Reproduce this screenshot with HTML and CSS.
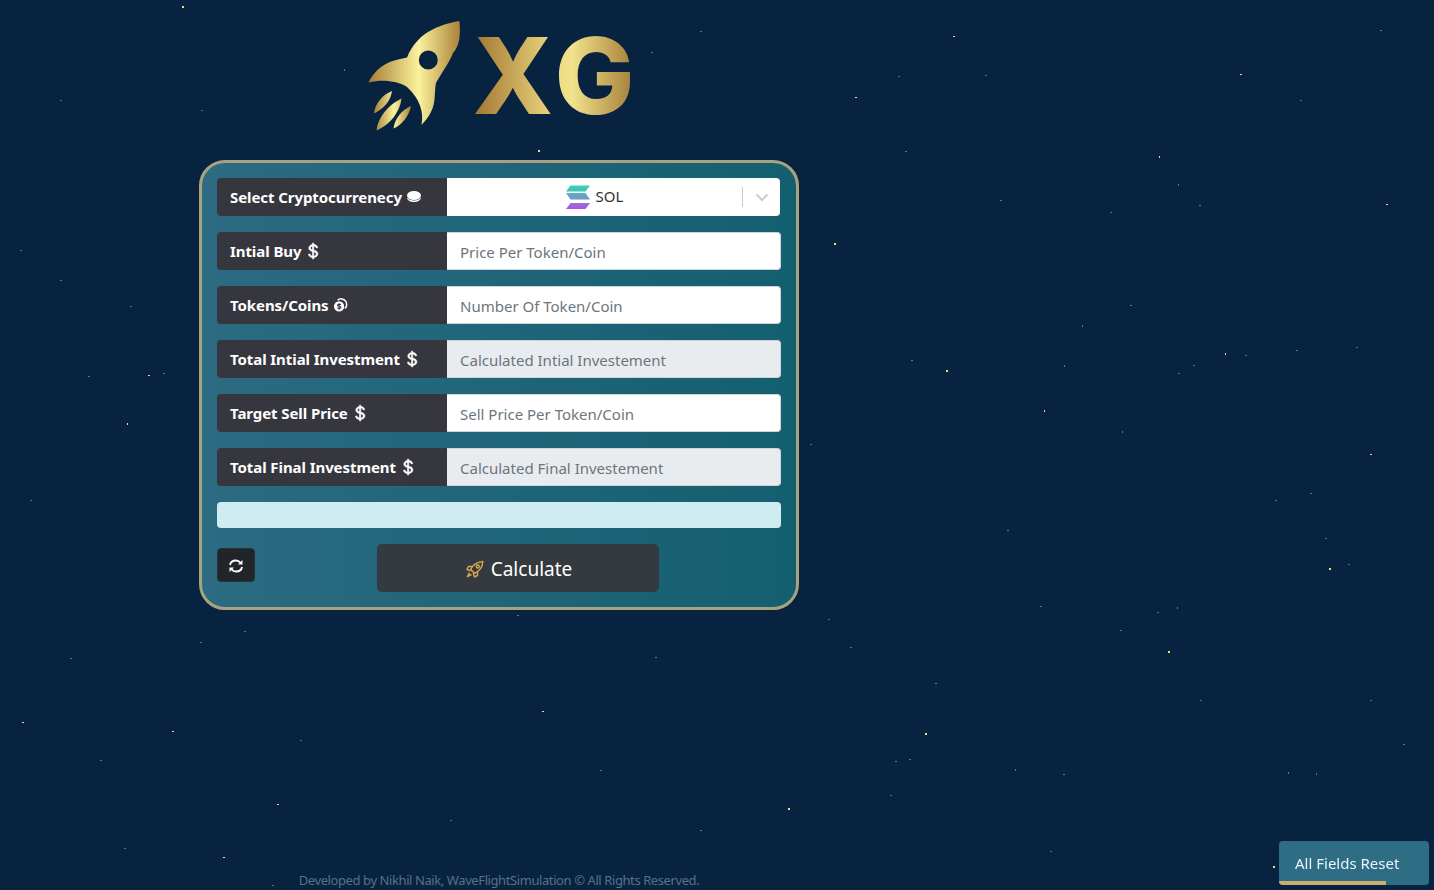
FILE: index.html
```html
<!DOCTYPE html>
<html lang="en">
  <head>
    <meta charset="UTF-8" />
    <meta name="viewport" content="width=device-width, initial-scale=1.0" />
    <title>XG Calculator</title>
    <link rel="stylesheet" href="styles.css">
  </head>
  <body>
    <!-- star field -->
    <svg class="stars" viewBox="0 0 1434 890" width="1434" height="890">
      <g fill="#e4e47a">
        <rect x="182" y="6" width="2" height="2"/><rect x="953" y="36" width="2" height="1"/><rect x="538" y="150" width="2" height="2"/>
        <rect x="855" y="97" width="2" height="1"/><rect x="834" y="243" width="2" height="2"/><rect x="946" y="370" width="2" height="2"/>
        <rect x="1159" y="156" width="1" height="2"/><rect x="1225" y="353" width="1" height="2"/><rect x="1329" y="568" width="2" height="2"/>
        <rect x="1168" y="651" width="2" height="2"/><rect x="22" y="722" width="2" height="1"/><rect x="925" y="733" width="2" height="2"/>
        <rect x="788" y="808" width="2" height="2"/><rect x="277" y="804" width="2" height="1"/><rect x="223" y="857" width="2" height="1"/>
        <rect x="542" y="711" width="2" height="1"/><rect x="172" y="731" width="2" height="1"/><rect x="1273" y="866" width="2" height="2"/>
        <rect x="1240" y="74" width="2" height="1"/><rect x="1386" y="204" width="2" height="1"/><rect x="148" y="375" width="2" height="1"/>
        <rect x="1044" y="410" width="1" height="2"/><rect x="127" y="423" width="1" height="2"/><rect x="1370" y="454" width="2" height="1"/>
      </g>
      <g fill="#5f8070">
        <rect x="700" y="31" width="2" height="1"/><rect x="651" y="52" width="2" height="1"/><rect x="201" y="110" width="2" height="1"/>
        <rect x="344" y="69" width="1" height="2"/><rect x="898" y="76" width="2" height="1"/><rect x="985" y="75" width="2" height="1"/>
        <rect x="1178" y="184" width="1" height="2"/><rect x="1199" y="205" width="2" height="1"/><rect x="1110" y="212" width="2" height="1"/>
        <rect x="905" y="151" width="2" height="1"/><rect x="1130" y="305" width="2" height="1"/><rect x="1082" y="325" width="1" height="2"/>
        <rect x="130" y="306" width="2" height="1"/><rect x="1178" y="373" width="2" height="1"/><rect x="1193" y="365" width="2" height="1"/>
        <rect x="1245" y="355" width="2" height="1"/><rect x="1296" y="350" width="2" height="1"/><rect x="1356" y="347" width="2" height="1"/>
        <rect x="88" y="376" width="2" height="1"/><rect x="163" y="373" width="2" height="1"/><rect x="810" y="444" width="2" height="1"/>
        <rect x="1064" y="365" width="1" height="2"/><rect x="911" y="360" width="2" height="1"/><rect x="1122" y="431" width="1" height="2"/>
        <rect x="1348" y="564" width="2" height="1"/><rect x="517" y="615" width="2" height="1"/><rect x="244" y="631" width="2" height="1"/>
        <rect x="828" y="619" width="2" height="1"/><rect x="1177" y="607" width="1" height="2"/><rect x="1157" y="612" width="2" height="1"/>
        <rect x="1040" y="606" width="2" height="1"/><rect x="1007" y="530" width="2" height="1"/><rect x="1275" y="500" width="2" height="1"/>
        <rect x="1310" y="493" width="2" height="1"/><rect x="1325" y="538" width="2" height="1"/><rect x="124" y="848" width="2" height="1"/>
        <rect x="1403" y="744" width="2" height="1"/><rect x="1288" y="772" width="1" height="2"/><rect x="1316" y="773" width="1" height="2"/>
        <rect x="1063" y="774" width="2" height="1"/><rect x="1015" y="769" width="1" height="2"/><rect x="909" y="759" width="2" height="1"/>
        <rect x="895" y="761" width="2" height="1"/><rect x="890" y="795" width="2" height="1"/><rect x="1050" y="851" width="2" height="1"/>
        <rect x="272" y="885" width="2" height="1"/><rect x="70" y="658" width="2" height="1"/><rect x="200" y="642" width="2" height="1"/>
        <rect x="655" y="657" width="2" height="1"/><rect x="935" y="683" width="2" height="1"/><rect x="850" y="647" width="2" height="1"/>
        <rect x="1120" y="630" width="2" height="1"/><rect x="1370" y="700" width="2" height="1"/><rect x="600" y="770" width="2" height="1"/>
        <rect x="450" y="820" width="2" height="1"/><rect x="700" y="830" width="2" height="1"/><rect x="300" y="740" width="2" height="1"/>
        <rect x="100" y="760" width="2" height="1"/><rect x="1200" y="700" width="2" height="1"/><rect x="30" y="500" width="2" height="1"/>
        <rect x="1000" y="200" width="2" height="1"/><rect x="1300" y="100" width="2" height="1"/><rect x="1380" y="30" width="2" height="1"/>
        <rect x="60" y="100" width="2" height="1"/><rect x="20" y="250" width="2" height="1"/><rect x="60" y="280" width="2" height="1"/>
      </g>
    </svg>

    <div class="page">
      <header class="logo">
        <svg class="rocket" viewBox="0 0 110 120" width="110" height="120">
          <defs>
            <linearGradient id="gold" x1="0" y1="0" x2="1" y2="0">
              <stop offset="0" stop-color="#a67f36"/>
              <stop offset="0.55" stop-color="#fbf29c"/>
              <stop offset="1" stop-color="#ab8238"/>
            </linearGradient>
          </defs>
          <path fill="url(#gold)" fill-rule="evenodd" d="M99.5 6 C100.5 20 100 30 93 38 C88 50 80 60 76 68 C74 78 76 88 71 97 C68 103 64 107 61.5 110 C64 97 60 84 47 72 C38 66 22 64 8.5 67.5 C14 56 24 47 40 44 C44 43 46 43 47 42.5 C52 30 60 22 68 17 C78 11 88 8 99.5 6 Z M68.3 35.5 A9.5 9.5 0 1 0 68.3 54.5 A9.5 9.5 0 1 0 68.3 35.5 Z"/>
          <path fill="url(#gold)" d="M32 76 C31 85 24 94 14 98.500 C15 89 22 80 32 76 Z M41.500 83.500 C40 97 30 110 16.500 115.500 C18 102 28 90 41.500 83.500 Z M51 91 C49 101 42 110 33.500 113.500 C35 103 42 95 51 91 Z"/>
        </svg>
        <span class="brand">XG</span>
      </header>

      <form class="panel">
        <div class="row">
          <label class="row-label">Select Cryptocurrenecy
            <svg class="ico" viewBox="0 0 16 16" width="16" height="16"><ellipse cx="8" cy="6.500" rx="7" ry="4.500" fill="#fff"/><path d="M1 8.500c0 2.500 3 4.500 7 4.500s7-2 7-4.500c-1.500 2-4 3-7 3s-5.500-1-7-3z" fill="#fff"/></svg>
          </label>
          <div class="select">
            <div class="select-value">
              <svg viewBox="0 0 24 24" width="24" height="24">
                <defs>
                  <linearGradient id="sol" x1="0" y1="0" x2="0" y2="1">
                    <stop offset="0" stop-color="#35d6ad"/>
                    <stop offset="0.5" stop-color="#6a9fc6"/>
                    <stop offset="1" stop-color="#b44fe6"/>
                  </linearGradient>
                </defs>
                <path fill="url(#sol)" d="M4.500 0.500H24L19.500 6.500H0Z M0 8H19.500L24 14.500H4.500Z M4.500 18H24L19.500 24H0Z"/>
              </svg>
              <span class="select-text">SOL</span>
            </div>
            <span class="select-sep"></span>
            <span class="select-arrow">
              <svg viewBox="0 0 20 20" width="20" height="20"><path d="M4.500 7.500L10 13L15.500 7.500" fill="none" stroke="#ccc" stroke-width="2"/></svg>
            </span>
          </div>
        </div>

        <div class="row">
          <label class="row-label">Intial Buy
            <svg class="ico ico-dollar" viewBox="0 0 16 16" width="18" height="18"><path fill="#fff" stroke="#fff" stroke-width=".6" d="M4 10.781c.148 1.667 1.513 2.85 3.591 3.003V15h1.043v-1.216c2.27-.179 3.678-1.438 3.678-3.3 0-1.59-.947-2.51-2.956-3.028l-.722-.187V3.467c1.122.11 1.879.714 2.07 1.616h1.47c-.166-1.6-1.54-2.748-3.54-2.875V1H7.591v1.233c-1.939.23-3.27 1.472-3.27 3.156 0 1.454.966 2.483 2.661 2.917l.61.162v4.031c-1.149-.17-1.94-.8-2.131-1.718H4zm3.391-3.836c-1.043-.263-1.6-.825-1.6-1.616 0-.944.704-1.641 1.8-1.828v3.495l-.2-.05zm1.591 1.872c1.287.323 1.852.859 1.852 1.769 0 1.097-.826 1.828-2.2 1.939V8.73l.348.086z"/></svg>
          </label>
          <input class="field" type="text" placeholder="Price Per Token/Coin">
        </div>

        <div class="row">
          <label class="row-label">Tokens/Coins
            <svg class="ico" viewBox="0 0 16 16" width="15" height="15"><circle cx="6.500" cy="9" r="5.500" fill="#fff"/><path d="M8.500 7.200c-1-.8-3.800-.8-3.800.6 0 1.600 3.800.6 3.800 2.300 0 1.300-2.800 1.300-3.900.5M6.500 5.400v7.200" fill="none" stroke="#36363e" stroke-width="1.100"/><path d="M5 2.500c1-1.200 2.700-1.800 4.500-1.500 3.300.5 5.500 3.500 5 6.800-.2 1.300-.8 2.500-1.700 3.400" fill="none" stroke="#fff" stroke-width="1.600"/></svg>
          </label>
          <input class="field" type="text" placeholder="Number Of Token/Coin">
        </div>

        <div class="row">
          <label class="row-label">Total Intial Investment
            <svg class="ico ico-dollar" viewBox="0 0 16 16" width="18" height="18"><path fill="#fff" stroke="#fff" stroke-width=".6" d="M4 10.781c.148 1.667 1.513 2.85 3.591 3.003V15h1.043v-1.216c2.27-.179 3.678-1.438 3.678-3.3 0-1.59-.947-2.51-2.956-3.028l-.722-.187V3.467c1.122.11 1.879.714 2.07 1.616h1.47c-.166-1.6-1.54-2.748-3.54-2.875V1H7.591v1.233c-1.939.23-3.27 1.472-3.27 3.156 0 1.454.966 2.483 2.661 2.917l.61.162v4.031c-1.149-.17-1.94-.8-2.131-1.718H4zm3.391-3.836c-1.043-.263-1.6-.825-1.6-1.616 0-.944.704-1.641 1.8-1.828v3.495l-.2-.05zm1.591 1.872c1.287.323 1.852.859 1.852 1.769 0 1.097-.826 1.828-2.2 1.939V8.73l.348.086z"/></svg>
          </label>
          <input class="field" type="text" placeholder="Calculated Intial Investement" disabled>
        </div>

        <div class="row">
          <label class="row-label">Target Sell Price
            <svg class="ico ico-dollar" viewBox="0 0 16 16" width="18" height="18"><path fill="#fff" stroke="#fff" stroke-width=".6" d="M4 10.781c.148 1.667 1.513 2.85 3.591 3.003V15h1.043v-1.216c2.27-.179 3.678-1.438 3.678-3.3 0-1.59-.947-2.51-2.956-3.028l-.722-.187V3.467c1.122.11 1.879.714 2.07 1.616h1.47c-.166-1.6-1.54-2.748-3.54-2.875V1H7.591v1.233c-1.939.23-3.27 1.472-3.27 3.156 0 1.454.966 2.483 2.661 2.917l.61.162v4.031c-1.149-.17-1.94-.8-2.131-1.718H4zm3.391-3.836c-1.043-.263-1.6-.825-1.6-1.616 0-.944.704-1.641 1.8-1.828v3.495l-.2-.05zm1.591 1.872c1.287.323 1.852.859 1.852 1.769 0 1.097-.826 1.828-2.2 1.939V8.73l.348.086z"/></svg>
          </label>
          <input class="field" type="text" placeholder="Sell Price Per Token/Coin">
        </div>

        <div class="row">
          <label class="row-label">Total Final Investment
            <svg class="ico ico-dollar" viewBox="0 0 16 16" width="18" height="18"><path fill="#fff" stroke="#fff" stroke-width=".6" d="M4 10.781c.148 1.667 1.513 2.85 3.591 3.003V15h1.043v-1.216c2.27-.179 3.678-1.438 3.678-3.3 0-1.59-.947-2.51-2.956-3.028l-.722-.187V3.467c1.122.11 1.879.714 2.07 1.616h1.47c-.166-1.6-1.54-2.748-3.54-2.875V1H7.591v1.233c-1.939.23-3.27 1.472-3.27 3.156 0 1.454.966 2.483 2.661 2.917l.61.162v4.031c-1.149-.17-1.94-.8-2.131-1.718H4zm3.391-3.836c-1.043-.263-1.6-.825-1.6-1.616 0-.944.704-1.641 1.8-1.828v3.495l-.2-.05zm1.591 1.872c1.287.323 1.852.859 1.852 1.769 0 1.097-.826 1.828-2.2 1.939V8.73l.348.086z"/></svg>
          </label>
          <input class="field" type="text" placeholder="Calculated Final Investement" disabled>
        </div>

        <div class="result"></div>

        <div class="actions">
          <button class="btn-reset" type="button">
            <svg viewBox="0 0 16 16" width="16" height="16" fill="none" stroke="#fff" stroke-width="1.800">
              <path d="M2 7C2.500 4.200 5 2.500 8 2.500c2 0 3.500 1 4.500 2.300"/>
              <path d="M14 9c-.5 2.800-3 4.500-6 4.500-2 0-3.500-1-4.500-2.300"/>
              <path d="M14.500 2v4.500H10z" fill="#fff" stroke="none"/>
              <path d="M1.500 14V9.500H6z" fill="#fff" stroke="none"/>
            </svg>
          </button>
          <button class="btn-calc" type="button">
            <svg viewBox="0 0 18 18" width="18" height="18" fill="none" stroke="#d6a84f" stroke-width="1.400" stroke-linejoin="round">
              <path d="M4.800 9.500C6 5.500 11 2 16.800 1.500C16.800 7 13 12 8.500 13.200Z"/>
              <circle cx="11.800" cy="6.500" r="1.500"/>
              <path d="M6.500 6.500H2.500L1 9.500L5 10.800"/>
              <path d="M11.500 11.500V15.500L8.500 17L7.200 13"/>
              <path d="M3.500 12.500L1.500 16.500L5.500 14.500"/>
            </svg>
            <span>Calculate</span>
          </button>
        </div>
      </form>

      <footer class="credit">Developed by Nikhil Naik, WaveFlightSimulation © All Rights Reserved.</footer>
    </div>

    <div class="toast">
      All Fields Reset
      <div class="toast-bar"></div>
    </div>
  </body>
</html>
```

FILE: styles.css
```css
* {
  box-sizing: border-box;
  margin: 0;
  padding: 0;
}
html, body {
  height: 890px;
  overflow: hidden;
}
body {
  background-color: #082340;
  font-family: "Noto Sans", "Open Sans", sans-serif;
  font-size: 15px;
  position: relative;
}
.stars {
  position: absolute;
  left: 0;
  top: 0;
}
.page {
  position: relative;
  width: 600px;
  height: 890px;
  margin-left: 199px;
  display: flex;
  flex-direction: column;
}

/* logo */
.logo {
  height: 160px;
  display: flex;
  align-items: flex-start;
  padding-top: 15px;
  padding-left: 161px;
}
.rocket {
  flex: none;
}
.brand {
  font-family: "Inter", "Liberation Sans", sans-serif;
  font-weight: 800;
  font-size: 106px;
  line-height: 122px;
  letter-spacing: 8px;
  margin-left: 2.5px;
  background: linear-gradient(90deg, #a37530 0%, #eedc84 50%, #f3e28c 58%, #98702c 100%);
  -webkit-background-clip: text;
  background-clip: text;
  color: transparent;
}

/* panel */
.panel {
  height: 450px;
  border: 3px solid #a9a27f;
  border-radius: 26px;
  padding: 15px;
  background: linear-gradient(90deg, #2c6b82, #135f70);
  display: flex;
  flex-direction: column;
  gap: 16px;
}
.row {
  display: flex;
  height: 38px;
  width: 564px;
}
.row-label {
  width: 230px;
  flex: none;
  background-color: #36363e;
  color: #fff;
  font-weight: 700;
  letter-spacing: -0.08px;
  border-radius: 4px 0 0 4px;
  padding-left: 13px;
  display: flex;
  align-items: center;
  gap: 4px;
  white-space: nowrap;
}
.ico-dollar {
  margin-left: -1px;
}
.field {
  flex: 1;
  min-width: 0;
  height: 38px;
  border: 1px solid #ced4da;
  border-left: 0;
  border-radius: 0 4px 4px 0;
  padding-left: 13px;
  padding-top: 2px;
  font-family: inherit;
  font-size: 15px;
  background-color: #fff;
  color: #212529;
}
.field::placeholder {
  color: #6c757d;
  opacity: 1;
}
.field:disabled {
  background-color: #e9ecef;
}

/* select */
.select {
  flex: 1;
  margin-right: 1px;
  background-color: #fff;
  border-radius: 0 4px 4px 0;
  display: flex;
  align-items: center;
}
.select-value {
  flex: 1;
  display: flex;
  justify-content: center;
  align-items: center;
  gap: 5px;
  color: #333;
}
.select-text {
  margin-bottom: 2px;
  margin-left: 1px;
}
.select-sep {
  width: 1px;
  height: 20px;
  background-color: #ccc;
}
.select-arrow {
  width: 37px;
  display: flex;
  justify-content: center;
}

.result {
  height: 26px;
  width: 564px;
  flex: none;
  background-color: #cfecf1;
  border-radius: 4px;
}
.actions {
  display: flex;
  align-items: center;
  height: 48px;
}
.btn-reset {
  width: 38px;
  height: 34px;
  margin-bottom: 7px;
  padding-top: 2px;
  background-color: #212529;
  border: 1px solid #2a333b;
  border-radius: 4px;
  display: flex;
  justify-content: center;
  align-items: center;
}
.btn-calc {
  width: 282px;
  height: 48px;
  margin-left: 122px;
  padding-top: 2px;
  padding-left: 2px;
  background-color: #343a40;
  border: 0;
  border-radius: 5px;
  color: #fff;
  font-family: inherit;
  font-size: 19px;
  display: flex;
  justify-content: center;
  align-items: center;
  gap: 7px;
}

.credit {
  margin-top: auto;
  height: 20px;
  text-align: center;
  font-size: 13px;
  line-height: 20px;
  letter-spacing: -0.41px;
  color: #56718c;
  white-space: nowrap;
}

/* toast sits over the page corner */
.toast {
  position: fixed;
  right: 5px;
  bottom: 5px;
  width: 150px;
  height: 44px;
  background-color: #2e6d84;
  border-radius: 4px;
  color: #e6f6fa;
  padding-left: 16px;
  line-height: 44px;
  overflow: hidden;
}
.toast-bar {
  position: absolute;
  left: 0;
  bottom: 0;
  width: 107px;
  height: 4px;
  background-color: #c9b26a;
}
```
